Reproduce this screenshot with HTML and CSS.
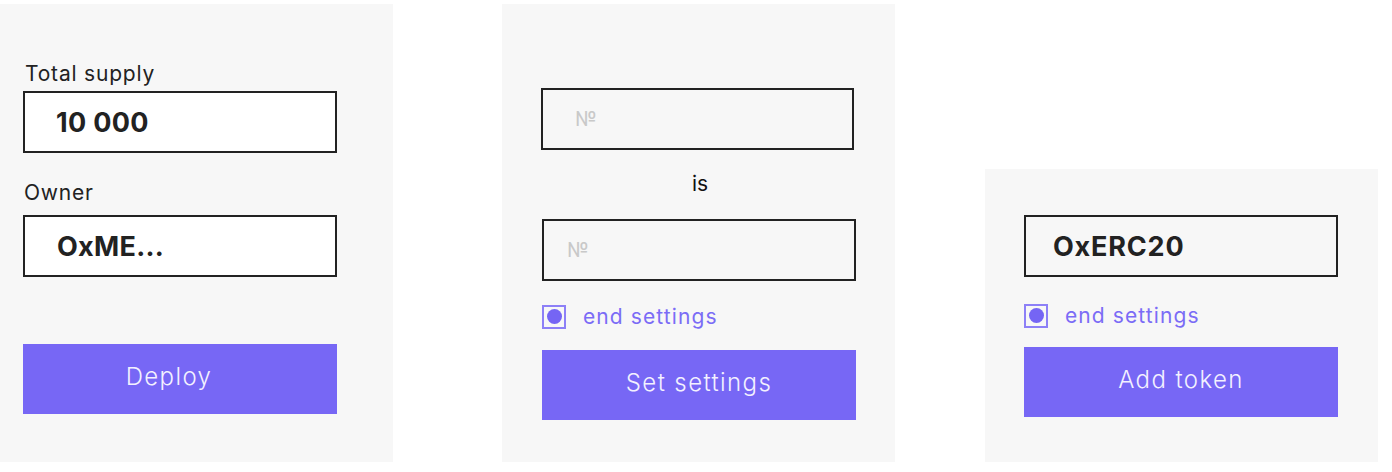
FILE: index.html
```html
<!DOCTYPE html>
<html lang="en">
<head>
<meta charset="utf-8">
<title>Token panels</title>
<link rel="stylesheet" href="styles.css">
</head>
<body>
<main class="board">
  <section class="panel panel-deploy">
    <div class="label label-supply">Total supply</div>
    <div class="field field-white value-supply">10 000</div>
    <div class="label label-owner">Owner</div>
    <div class="field field-white value-owner">OxME...</div>
    <button class="btn btn-deploy">Deploy</button>
  </section>

  <section class="panel panel-settings">
    <div class="field field-grey ph ph-first">№</div>
    <div class="is-text">is</div>
    <div class="field field-grey ph ph-second">№</div>
    <label class="check-row">
      <span class="check"><span class="dot"></span></span>
      <span class="check-label">end settings</span>
    </label>
    <button class="btn btn-settings">Set settings</button>
  </section>

  <section class="panel panel-token">
    <div class="field field-grey value-token">OxERC20</div>
    <label class="check-row check-row-token">
      <span class="check"><span class="dot"></span></span>
      <span class="check-label">end settings</span>
    </label>
    <button class="btn btn-token">Add token</button>
  </section>
</main>
</body>
</html>
```
FILE: styles.css
```css
* { box-sizing: border-box; }

html, body {
  margin: 0;
  padding: 0;
  background: #ffffff;
}

body {
  font-family: Inter, "Open Sans", sans-serif;
  color: #222222;
}

.board {
  display: flex;
  align-items: flex-end;
  padding-top: 4px;
  height: 462px;
}

.panel {
  background: #f7f7f7;
  width: 393px;
  display: flex;
  flex-direction: column;
}

.panel-deploy {
  height: 458px;
  padding-left: 23px;
}

.panel-settings {
  height: 458px;
  margin-left: 109px;
  padding-left: 39px;
}

.panel-token {
  height: 293px;
  margin-left: 90px;
  padding-left: 39px;
}

.label {
  font-size: 21px;
  line-height: 24px;
  font-weight: 400;
  letter-spacing: 0.8px;
  color: #222222;
  padding-left: 2px;
}

.label-supply { margin-top: 58px; }
.label-owner { margin-top: 28px; padding-left: 1px; }

.field {
  width: 314px;
  height: 62px;
  border: 2px solid #222222;
  display: flex;
  align-items: center;
  font-size: 27px;
  font-weight: 700;
  color: #222222;
  letter-spacing: 0.3px;
}

.field-white { background: #ffffff; }
.field-grey { background: #f7f7f7; }

.value-supply { margin-top: 5px; padding-left: 31px; }
.value-owner { margin-top: 10px; padding-left: 32px; }

.ph {
  font-size: 20px;
  font-weight: 400;
  color: #c9c9c9;
  letter-spacing: 0;
}

.ph-first { margin-top: 84px; width: 313px; padding-left: 32px; }
.ph-second { margin-top: 23px; margin-left: 1px; padding-left: 23px; }

.is-text {
  margin-top: 22px;
  width: 313px;
  padding-left: 5px;
  text-align: center;
  font-size: 21px;
  line-height: 24px;
  color: #111111;
}

.value-token { margin-top: 46px; padding-left: 27px; letter-spacing: 0.8px; }

.check-row {
  display: flex;
  align-items: center;
  margin-top: 24px;
  margin-left: 1px;
  height: 23px;
}

.check-row-token { margin-top: 27px; margin-left: 0; }

.check {
  width: 24px;
  height: 24px;
  border: 2px solid #8d80f7;
  display: flex;
  align-items: center;
  justify-content: center;
}

.dot {
  width: 15px;
  height: 15px;
  border-radius: 50%;
  background: #7565f4;
}

.check-label {
  margin-left: 17px;
  font-size: 21px;
  line-height: 24px;
  color: #7b6cf6;
  letter-spacing: 1.1px;
}

.btn {
  width: 314px;
  height: 70px;
  border: none;
  background: #7767f5;
  color: #f3f1ff;
  font-family: Inter, "Open Sans", sans-serif;
  font-size: 24px;
  font-weight: 300;
  letter-spacing: 1.4px;
  padding: 0 0 5px 0;
}

.btn-deploy { margin-top: 67px; padding-right: 22px; }
.btn-settings { margin-top: 22px; margin-left: 1px; }
.btn-token { margin-top: 20px; }
```
